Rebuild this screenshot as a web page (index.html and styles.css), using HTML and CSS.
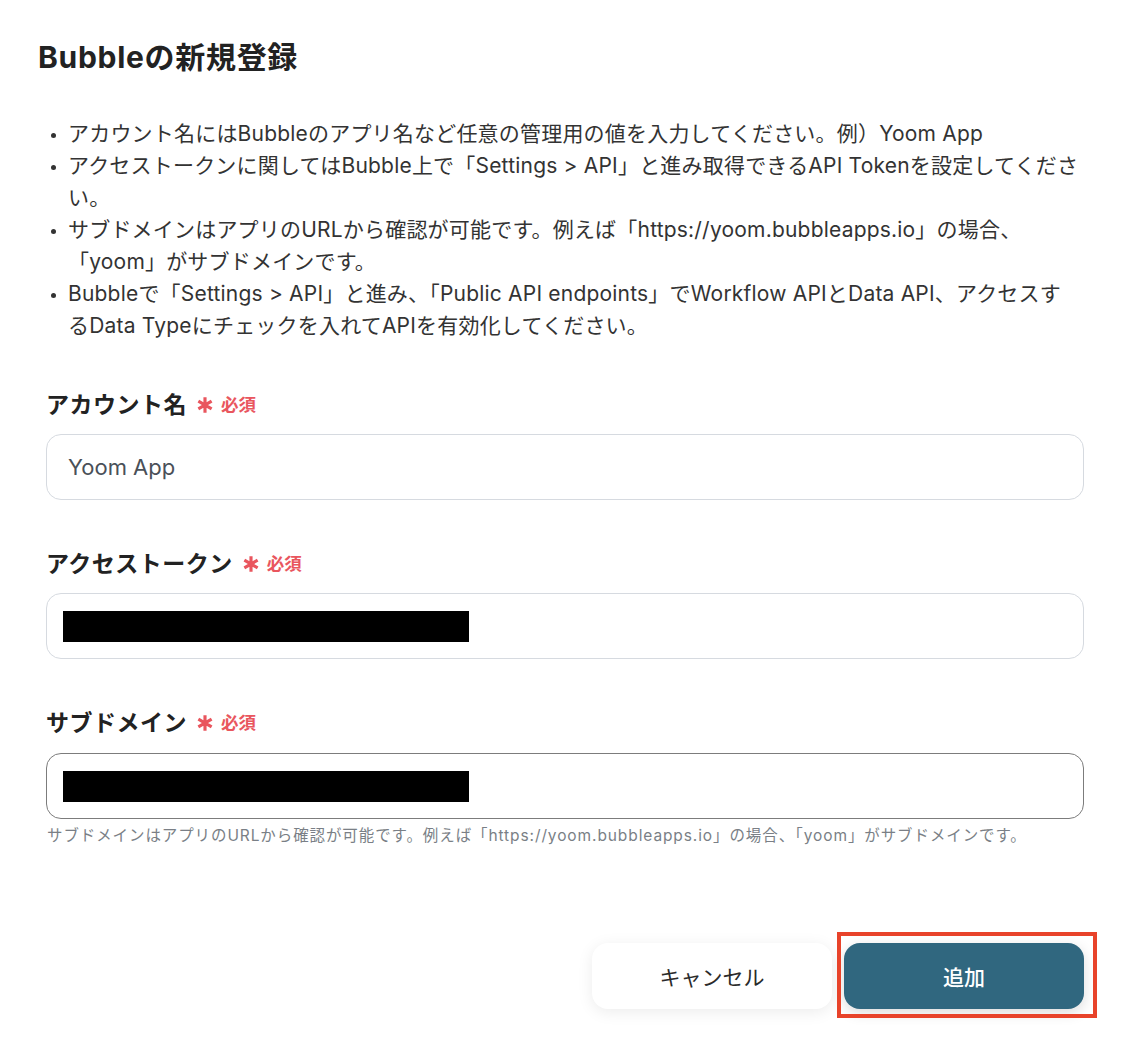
FILE: index.html
```html
<!DOCTYPE html>
<html lang="ja">
<head>
<meta charset="utf-8">
<title>Bubbleの新規登録</title>
<link rel="stylesheet" href="styles.css">
</head>
<body>
<div class="page">
  <h1 class="title">Bubbleの新規登録</h1>
  <div class="form">
    <ul class="notes">
      <li>アカウント名にはBubbleのアプリ名など任意の管理用の値を入力してください。例）Yoom App</li>
      <li>アクセストークンに関してはBubble上で「Settings &gt; API」と進み取得できるAPI Tokenを設定してくださ<br>い。</li>
      <li>サブドメインはアプリのURLから確認が可能です。例えば「https://yoom.bubbleapps.io」の場合、<br>「yoom」がサブドメインです。</li>
      <li>Bubbleで「Settings &gt; API」と進み、「Public API endpoints」でWorkflow APIとData API、アクセスす<br>るData Typeにチェックを入れてAPIを有効化してください。</li>
    </ul>

    <div class="field">
      <div class="label">アカウント名<svg class="req-star" viewBox="0 0 16 16"><path d="M8 1.2v13.6M2.1 4.6l11.8 6.8M2.1 11.4l11.8-6.8"/></svg><span class="req">必須</span></div>
      <div class="input"><span class="value">Yoom App</span></div>
    </div>

    <div class="field">
      <div class="label">アクセストークン<svg class="req-star" viewBox="0 0 16 16"><path d="M8 1.2v13.6M2.1 4.6l11.8 6.8M2.1 11.4l11.8-6.8"/></svg><span class="req">必須</span></div>
      <div class="input"><span class="redact"></span></div>
    </div>

    <div class="field">
      <div class="label">サブドメイン<svg class="req-star" viewBox="0 0 16 16"><path d="M8 1.2v13.6M2.1 4.6l11.8 6.8M2.1 11.4l11.8-6.8"/></svg><span class="req">必須</span></div>
      <div class="input input-focus"><span class="redact"></span></div>
      <p class="help">サブドメインはアプリのURLから確認が可能です。例えば「https://yoom.bubbleapps.io」の場合、「yoom」がサブドメインです。</p>
    </div>

    <div class="actions">
      <button class="btn btn-cancel" type="button">キャンセル</button>
      <div class="add-wrap">
        <button class="btn btn-add" type="button">追加</button>
        <span class="highlight"></span>
      </div>
    </div>
  </div>
</div>
</body>
</html>
```

FILE: styles.css
```css
* { box-sizing: border-box; }

html, body {
  margin: 0;
  padding: 0;
  background: #ffffff;
}

body {
  min-height: 1056px;
  font-family: Inter, "Noto Sans CJK JP", sans-serif;
  color: #333333;
}

.page {
  width: 1130px;
  padding: 37px 46px 46px 38px;
}

.title {
  margin: 0;
  font-size: 30px;
  line-height: 40px;
  font-weight: 700;
  color: #222222;
  letter-spacing: 0.7px;
}

.form {
  margin-left: 8px;
}

.notes {
  margin: 41px 0 0 0;
  padding-left: 22px;
  font-size: 21px;
  line-height: 32px;
  letter-spacing: 0.2px;
  color: #333333;
  white-space: nowrap;
}

.notes li::marker {
  font-size: 15px;
}

.field {
  margin-top: 48px;
}

.field + .field {
  margin-top: 49px;
}

.label {
  display: flex;
  align-items: center;
  font-size: 23px;
  line-height: 30px;
  font-weight: 700;
  color: #222222;
  letter-spacing: 0.5px;
}

.req-star {
  width: 18px;
  height: 18px;
  margin-left: 9px;
  fill: none;
  stroke: #e9565e;
  stroke-width: 2.8;
}

.req {
  margin-left: 7px;
  font-size: 17.5px;
  font-weight: 700;
  color: #e9565e;
  letter-spacing: 0;
}

.input {
  margin-top: 14px;
  height: 66px;
  border: 1px solid #d6dae0;
  border-radius: 15px;
  display: flex;
  align-items: center;
  padding-left: 21px;
}

.input-focus {
  margin-top: 15px;
  border-color: #7c7c7c;
}

.value {
  font-size: 22px;
  color: #4a5058;
}

.redact {
  display: block;
  width: 406px;
  height: 31px;
  background: #000000;
  margin-left: -5px;
}

.help {
  margin: 6px 0 0 1px;
  font-size: 15.5px;
  line-height: 22px;
  letter-spacing: 0.9px;
  color: #7a7f86;
  white-space: nowrap;
}

.actions {
  margin-top: 96px;
  display: flex;
  justify-content: flex-end;
  gap: 12px;
}

.btn {
  width: 240px;
  height: 66px;
  border: none;
  border-radius: 16px;
  font-family: Inter, "Noto Sans CJK JP", sans-serif;
  font-size: 21px;
  cursor: pointer;
}

.btn-cancel {
  background: #ffffff;
  color: #2a2a2a;
  box-shadow: 0 3px 16px rgba(0, 0, 0, 0.08);
}

.add-wrap {
  position: relative;
}

.btn-add {
  display: block;
  background: #30677f;
  color: #ffffff;
  font-weight: 500;
  box-shadow: 0 4px 14px rgba(0, 0, 0, 0.14);
}

.highlight {
  position: absolute;
  left: -7px;
  right: -13px;
  top: -11px;
  bottom: -9px;
  border: 4px solid #e8432a;
  pointer-events: none;
}
```
